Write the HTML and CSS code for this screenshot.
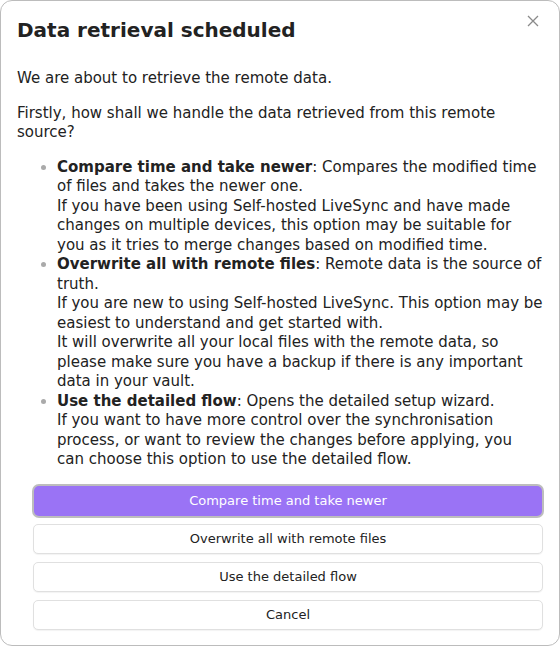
FILE: index.html
```html
<!DOCTYPE html>
<html lang="en">
<head>
    <meta charset="UTF-8">
    <meta name="viewport" content="width=device-width, initial-scale=1.0">
    <title>Data retrieval scheduled</title>
    <link rel="stylesheet" href="styles.css">
</head>
<body>
    <div class="modal">
        <button class="modal-close" aria-label="Close">
            <svg width="14" height="14" viewBox="0 0 14 14">
                <path d="M2 2 L12 12 M12 2 L2 12" stroke="#8a8a8a" stroke-width="1.3" fill="none"/>
            </svg>
        </button>
        <div class="modal-title">Data retrieval scheduled</div>

        <div class="modal-content">
            <p>We are about to retrieve the remote data.</p>
            <p>Firstly, how shall we handle the data retrieved from this remote source?</p>
            <ul>
                <li><strong>Compare time and take newer</strong>: Compares the modified time of files and takes the newer one.<br>If you have been using Self-hosted LiveSync and have made changes on multiple devices, this option may be suitable for you as it tries to merge changes based on modified time.</li>
                <li><strong>Overwrite all with remote files</strong>: Remote data is the source of truth.<br>If you are new to using Self-hosted LiveSync. This option may be easiest to understand and get started with.<br>It will overwrite all your local files with the remote data, so please make sure you have a backup if there is any important data in your vault.</li>
                <li><strong>Use the detailed flow</strong>: Opens the detailed setup wizard.<br>If you want to have more control over the synchronisation process, or want to review the changes before applying, you can choose this option to use the detailed flow.</li>
            </ul>
        </div>

        <div class="button-list">
            <button class="btn mod-cta">Compare time and take newer</button>
            <button class="btn">Overwrite all with remote files</button>
            <button class="btn">Use the detailed flow</button>
            <button class="btn">Cancel</button>
        </div>
    </div>
</body>
</html>
```

FILE: styles.css
```css
* {
    box-sizing: border-box;
}

body {
    margin: 0;
    font-family: "DejaVu Sans", "Liberation Sans", sans-serif;
    color: #222;
    background-color: #fff;
}

.modal {
    position: relative;
    width: 560px;
    height: 646px;
    padding: 16px;
    border: 1px solid #bcbcbc;
    border-radius: 12px;
    background-color: #fff;
}

.modal-close {
    position: absolute;
    top: 12px;
    right: 18px;
    width: 16px;
    height: 16px;
    padding: 0;
    border: none;
    background: none;
    display: flex;
    align-items: center;
    justify-content: center;
}

.modal-title {
    font-size: 20px;
    font-weight: bold;
    line-height: 26px;
    margin-bottom: 26px;
}

.modal-content {
    font-size: 15px;
    line-height: 19.5px;
}

.modal-content p {
    margin: 15px 0;
}

.modal-content ul {
    margin: 15px 0;
    padding-left: 40px;
}

.modal-content li::marker {
    color: #aaa;
}

.button-list {
    display: flex;
    flex-direction: column;
    gap: 8px;
    margin-left: 16px;
}

.btn {
    height: 30px;
    font-family: "DejaVu Sans", "Liberation Sans", sans-serif;
    font-size: 13px;
    color: #222;
    background-color: #fff;
    border: 1px solid #e0e0e0;
    border-radius: 5px;
    box-shadow: 0 1px 1px rgba(0, 0, 0, 0.05);
}

.btn.mod-cta {
    background-color: #9a73f5;
    color: #fff;
    border: none;
    box-shadow: 0 0 0 2px #bdbdbd;
    margin: 1px 1px 0 1px;
}
```
